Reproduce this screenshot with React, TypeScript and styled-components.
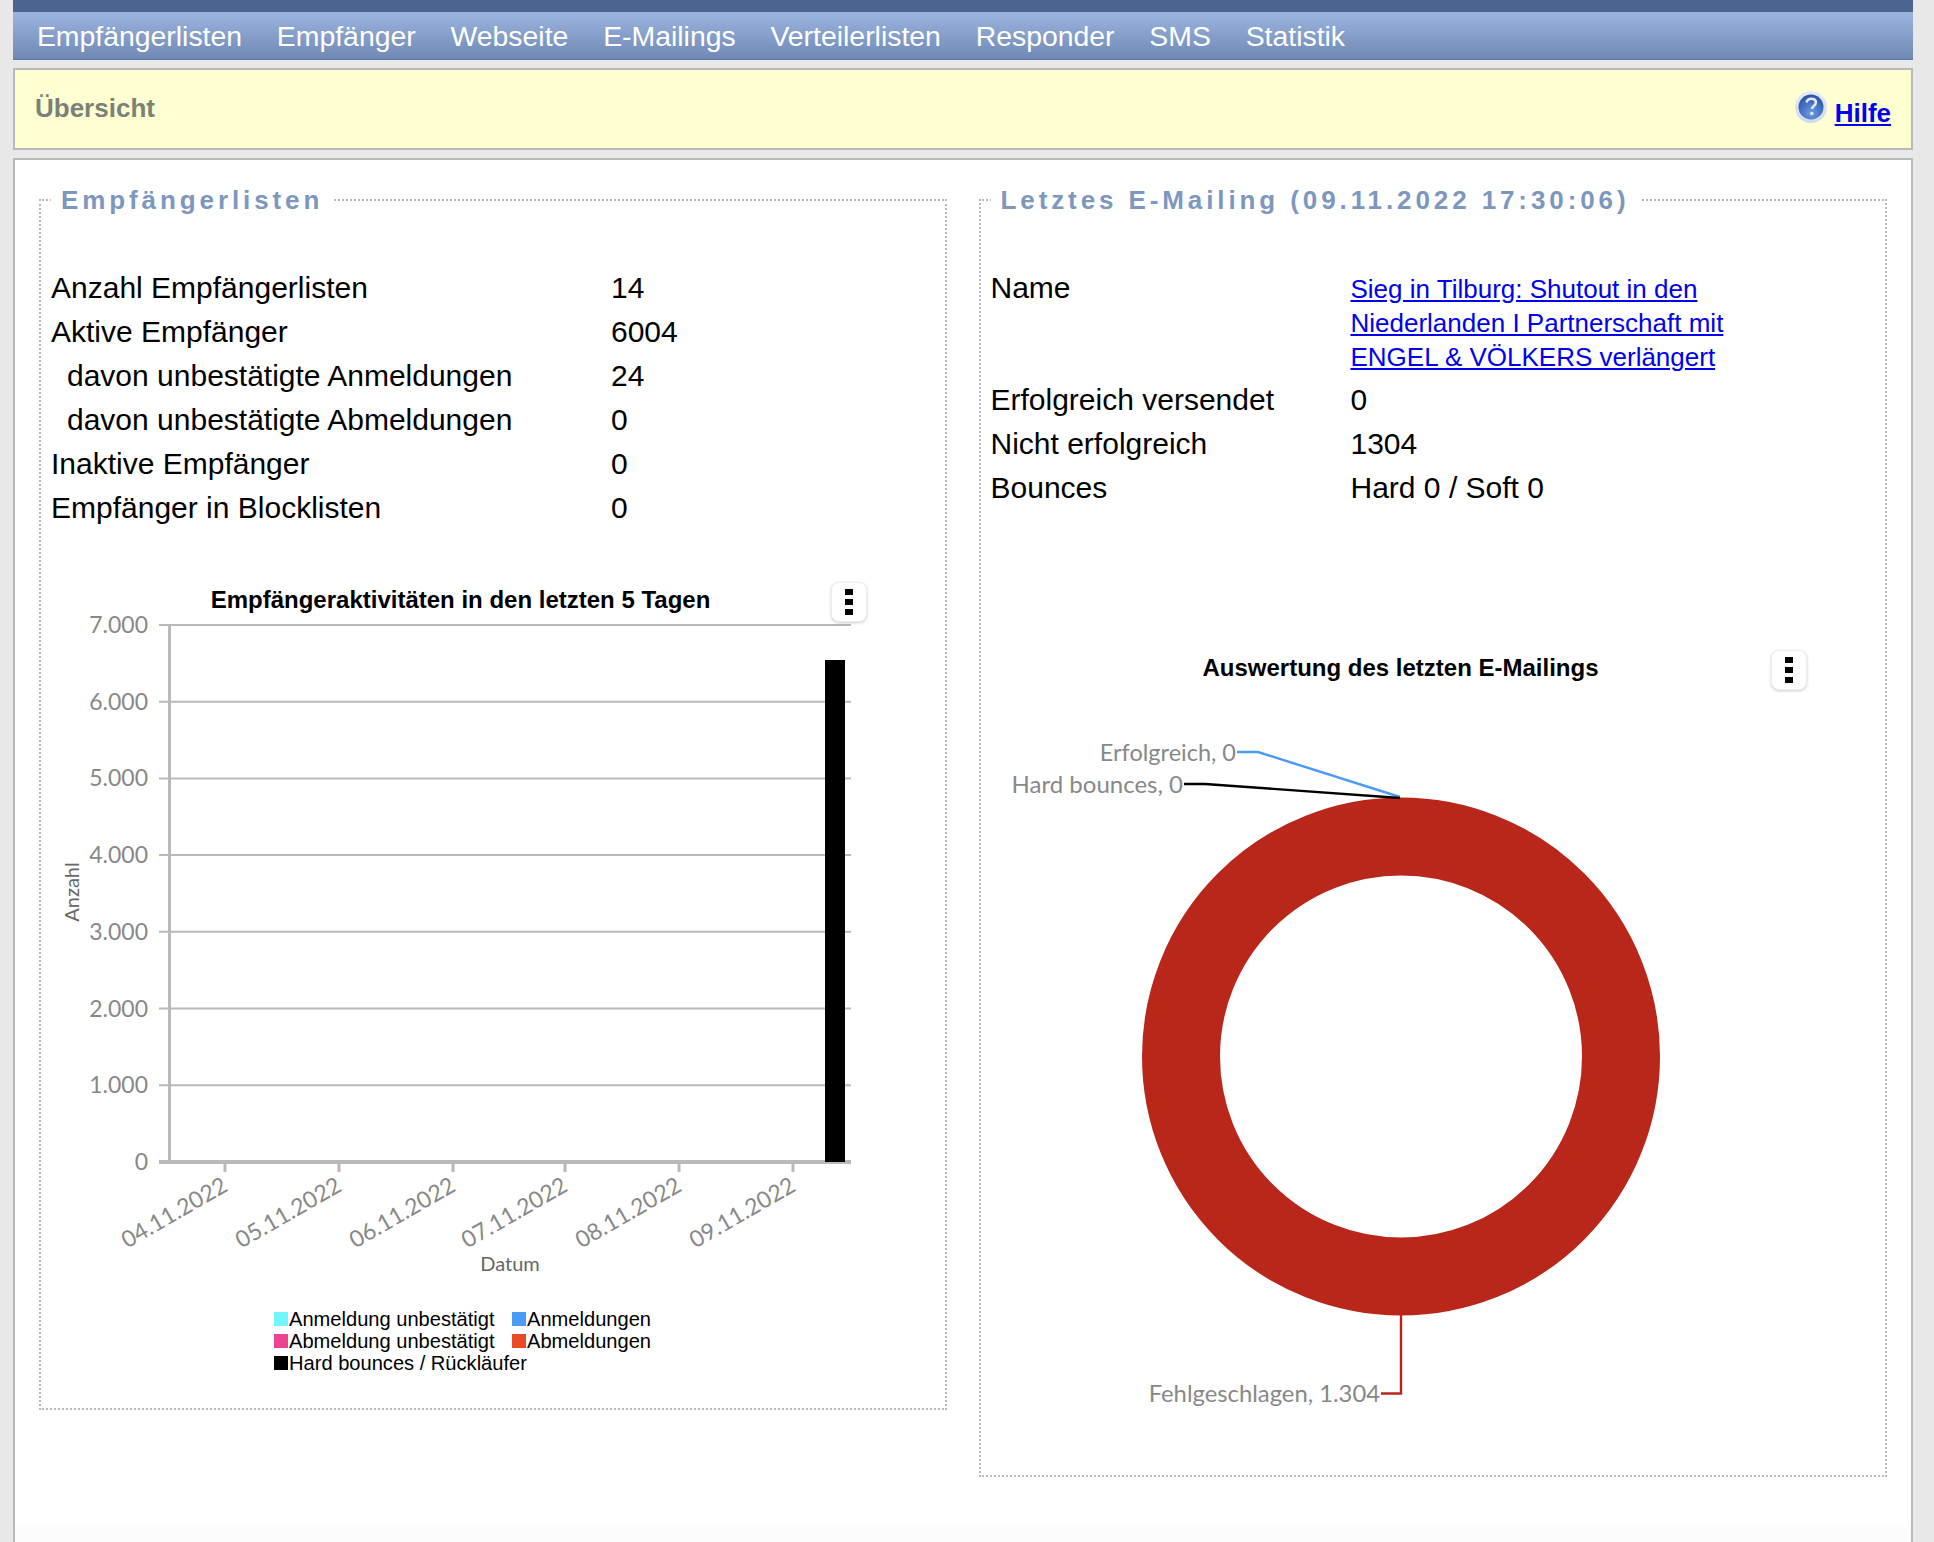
import styled, { createGlobalStyle } from 'styled-components';

const GlobalStyle = createGlobalStyle`
  html, body {
    margin: 0;
    padding: 0;
    background: #e8e8e8;
    font-family: "Liberation Sans", Arial, sans-serif;
    overflow: hidden;
  }
`;

const Page = styled.div`
  width: 1900px;
  height: 1542px;
  margin-left: 13px;
  display: flex;
  flex-direction: column;
  overflow: hidden;
`;

const TopStrip = styled.div`
  height: 12px;
  background: #4b6490;
`;

const Nav = styled.nav`
  height: 47px;
  padding-left: 6.5px;
  display: flex;
  background: linear-gradient(#9cb5e0, #6f88b4);
  border-bottom: 1px solid #5d7aaa;
`;

const NavLink = styled.a`
  padding: 0 17.4px;
  font-size: 28.4px;
  line-height: 48px;
  color: #fff;
`;

const TitleBar = styled.div`
  box-sizing: border-box;
  height: 82px;
  margin-top: 8px;
  padding: 0 20px 0 20px;
  display: flex;
  align-items: center;
  justify-content: space-between;
  background: #ffffd2;
  border: 2px solid #b9b9b9;
`;

const PageTitle = styled.h1`
  margin: 0 0 2px;
  font-size: 26px;
  font-weight: bold;
  color: #7a8278;
`;

const HelpArea = styled.div`
  display: flex;
  align-items: flex-start;
  gap: 8px;
`;

const HelpIconBox = styled.svg`
  display: block;
  margin-top: 2px;
`;

const HelpLink = styled.a`
  margin-top: 9px;
  font-size: 26px;
  font-weight: bold;
  color: #0000ee;
  text-decoration: underline;
`;

const Content = styled.main`
  flex: 1;
  margin-top: 8px;
  padding: 25px 24px 0 24px;
  display: flex;
  align-items: flex-start;
  gap: 32px;
  background: linear-gradient(#fff 1357px, #fcfcfc 1372px);
  border: 2px solid #b9b9b9;
  border-bottom: 0;
`;

const Panel = styled.fieldset<{ $width: number }>`
  box-sizing: border-box;
  width: ${p => p.$width}px;
  min-width: 0;
  margin: 0;
  padding: 0 10px;
  border: 2px dotted #b9b9b9;
`;

const PanelTitle = styled.legend`
  margin-left: 0;
  padding: 0 10px;
  font-size: 26px;
  line-height: 30px;
  font-weight: bold;
  letter-spacing: 3.9px;
  color: #7d97bf;
`;

const Stats = styled.table`
  margin-top: 51px;
  border-collapse: collapse;
  font-size: 30px;
  color: #000;
`;

const Label = styled.td<{ $width: number; $indent?: boolean }>`
  width: ${p => p.$width}px;
  height: 44px;
  padding: 0 0 0 ${p => (p.$indent ? 16 : 0)}px;
  box-sizing: border-box;
  line-height: 44px;
  vertical-align: top;
`;

const Value = styled.td`
  padding: 0;
  line-height: 44px;
  vertical-align: top;
`;

const MailLink = styled.a`
  display: block;
  padding: 6px 0 4px;
  font-size: 26px;
  line-height: 34px;
  color: #0000ee;
  text-decoration: underline;
`;

const ChartWrap = styled.div<{ $gap: number }>`
  position: relative;
  margin-top: ${p => p.$gap}px;
`;

const ChartSvg = styled.svg`
  display: block;
`;

const ChartMenu = styled.button<{ $top: number }>`
  position: absolute;
  left: 780px;
  top: ${p => p.$top}px;
  width: 36px;
  height: 40px;
  padding: 6px 0;
  display: flex;
  flex-direction: column;
  align-items: center;
  justify-content: space-between;
  background: #fff;
  border: 1px solid #eee;
  border-radius: 8px;
  box-shadow: 0 1px 3px rgba(0, 0, 0, 0.2);
`;

const MenuDot = styled.span`
  width: 8px;
  height: 6px;
  background: #000;
`;

const ChartTitle = styled.text`
  font-family: "Liberation Sans", Arial, sans-serif;
  font-size: 24px;
  font-weight: bold;
  fill: #000;
  text-anchor: middle;
`;

const AxisLabel = styled.text<{ $size?: number }>`
  font-family: Lato, "Open Sans", sans-serif;
  font-size: ${p => p.$size ?? 23}px;
  fill: #888;
  text-anchor: end;
`;

const AxisTitle = styled.text`
  font-family: Lato, "Open Sans", sans-serif;
  font-size: 20px;
  fill: #666;
  text-anchor: middle;
`;

const LegendText = styled.text`
  font-family: "Liberation Sans", Arial, sans-serif;
  font-size: 20.1px;
  fill: #000;
`;

const navItems = ['Empfängerlisten', 'Empfänger', 'Webseite', 'E-Mailings', 'Verteilerlisten', 'Responder', 'SMS', 'Statistik'];

const leftRows: [string, string, boolean?][] = [
  ['Anzahl Empfängerlisten', '14'],
  ['Aktive Empfänger', '6004'],
  ['davon unbestätigte Anmeldungen', '24', true],
  ['davon unbestätigte Abmeldungen', '0', true],
  ['Inaktive Empfänger', '0'],
  ['Empfänger in Blocklisten', '0'],
];

const rightRows = [
  ['Erfolgreich versendet', '0'],
  ['Nicht erfolgreich', '1304'],
  ['Bounces', 'Hard 0 / Soft 0'],
];

const yTicks = [7, 6, 5, 4, 3, 2, 1, 0];
const yTop = 625;
const yStep = 76.7;
const xTicks = [
  ['04.11.2022', 225],
  ['05.11.2022', 339],
  ['06.11.2022', 453],
  ['07.11.2022', 565],
  ['08.11.2022', 679],
  ['09.11.2022', 793],
] as const;

const legendItems = [
  ['Anmeldung unbestätigt', '#6ff7fb', 274, 1312],
  ['Anmeldungen', '#4a9bf5', 512, 1312],
  ['Abmeldung unbestätigt', '#ec4393', 274, 1334],
  ['Abmeldungen', '#ec4a26', 512, 1334],
  ['Hard bounces / Rückläufer', '#000', 274, 1356],
] as const;

function HelpIcon() {
  return (
    <HelpIconBox width="32" height="32" viewBox="0 0 32 32">
      <defs>
        <linearGradient id="helpRing" x1="0" y1="0" x2="0" y2="1">
          <stop offset="0%" stopColor="#e6ebf5" />
          <stop offset="100%" stopColor="#cfd9ec" />
        </linearGradient>
        <radialGradient id="helpBlue" cx="50%" cy="75%" r="70%">
          <stop offset="0%" stopColor="#6b9be6" />
          <stop offset="100%" stopColor="#2c55a6" />
        </radialGradient>
      </defs>
      <circle cx="16" cy="16" r="16" fill="url(#helpRing)" />
      <circle cx="16" cy="16" r="12.5" fill="url(#helpBlue)" />
      <path d="M11.5 11.5c.6-2.6 2.4-3.8 4.8-3.8 2.7 0 4.6 1.5 4.6 3.8 0 3.3-4 3.6-4 6.6" fill="none" stroke="#dfe7f6" strokeWidth="2.6" />
      <circle cx="16.8" cy="22.5" r="1.8" fill="#dfe7f6" />
    </HelpIconBox>
  );
}

function ActivityChart() {
  return (
    <ChartSvg width="880" height="847" viewBox="51 561 880 847">
      <ChartTitle x="460.5" y="608">Empfängeraktivitäten in den letzten 5 Tagen</ChartTitle>
      {yTicks.map((tick, i) => {
        const y = yTop + i * yStep;
        return (
          <g key={tick}>
            {tick > 0 && <line x1="159" x2="851" y1={y} y2={y} stroke="#b9b9b9" strokeWidth="2" />}
            <AxisLabel x="148" y={y + 8}>{tick === 0 ? '0' : `${tick}.000`}</AxisLabel>
          </g>
        );
      })}
      <line x1="169.5" x2="169.5" y1={yTop - 1} y2="1162" stroke="#b9b9b9" strokeWidth="3" />
      <line x1="159" x2="851" y1="1162" y2="1162" stroke="#b9b9b9" strokeWidth="4" />
      <rect x="825" y="660" width="20" height="502" fill="#000" />
      {xTicks.map(([label, x]) => (
        <g key={label}>
          <line x1={x} x2={x} y1="1163" y2="1172" stroke="#b9b9b9" strokeWidth="3" />
          <AxisLabel x={x + 4} y="1190" transform={`rotate(-30 ${x + 4} 1190)`}>{label}</AxisLabel>
        </g>
      ))}
      <AxisTitle x="510" y="1271">Datum</AxisTitle>
      <AxisTitle x="79" y="892" transform="rotate(-90 79 892)">Anzahl</AxisTitle>
      {legendItems.map(([label, color, x, y]) => (
        <g key={label}>
          <rect x={x} y={y} width="14" height="14" fill={color} />
          <LegendText x={x + 15} y={y + 14}>{label}</LegendText>
        </g>
      ))}
    </ChartSvg>
  );
}

function DonutChart() {
  return (
    <ChartSvg width="880" height="835" viewBox="991 640 880 835">
      <ChartTitle x="1400.5" y="676">Auswertung des letzten E-Mailings</ChartTitle>
      <circle cx="1401" cy="1056.5" r="220" fill="none" stroke="#b9271b" strokeWidth="78" />
      <polyline points="1237,752 1258,752 1400,797" fill="none" stroke="#4a9bf5" strokeWidth="2.4" />
      <polyline points="1184,784 1205,784 1400,798" fill="none" stroke="#000" strokeWidth="2.4" />
      <polyline points="1401,1315 1401,1393.5 1381,1393.5" fill="none" stroke="#b9271b" strokeWidth="2.4" />
      <AxisLabel $size={23.5} x="1236" y="761">Erfolgreich, 0</AxisLabel>
      <AxisLabel $size={24} x="1183" y="793">Hard bounces, 0</AxisLabel>
      <AxisLabel $size={23.8} x="1380" y="1402">Fehlgeschlagen, 1.304</AxisLabel>
    </ChartSvg>
  );
}

export default function App() {
  return (
    <Page>
      <GlobalStyle />
      <TopStrip />
      <Nav>
        {navItems.map(item => (
          <NavLink key={item}>{item}</NavLink>
        ))}
      </Nav>
      <TitleBar>
        <PageTitle>Übersicht</PageTitle>
        <HelpArea>
          <HelpIcon />
          <HelpLink href="#">Hilfe</HelpLink>
        </HelpArea>
      </TitleBar>
      <Content>
        <Panel $width={908}>
          <PanelTitle>Empfängerlisten</PanelTitle>
          <Stats>
            <tbody>
              {leftRows.map(([label, value, indent]) => (
                <tr key={label}>
                  <Label $width={560} $indent={indent}>{label}</Label>
                  <Value>{value}</Value>
                </tr>
              ))}
            </tbody>
          </Stats>
          <ChartWrap $gap={31}>
            <ActivityChart />
            <ChartMenu $top={21}><MenuDot /><MenuDot /><MenuDot /></ChartMenu>
          </ChartWrap>
        </Panel>
        <Panel $width={909}>
          <PanelTitle>Letztes E-Mailing (09.11.2022 17:30:06)</PanelTitle>
          <Stats>
            <tbody>
              <tr>
                <Label $width={360}>Name</Label>
                <Value>
                  <MailLink href="#">
                    Sieg in Tilburg: Shutout in den<br />
                    Niederlanden I Partnerschaft mit<br />
                    ENGEL &amp; VÖLKERS verlängert
                  </MailLink>
                </Value>
              </tr>
              {rightRows.map(([label, value]) => (
                <tr key={label}>
                  <Label $width={360}>{label}</Label>
                  <Value>{value}</Value>
                </tr>
              ))}
            </tbody>
          </Stats>
          <ChartWrap $gap={130}>
            <DonutChart />
            <ChartMenu $top={10}><MenuDot /><MenuDot /><MenuDot /></ChartMenu>
          </ChartWrap>
        </Panel>
      </Content>
    </Page>
  );
}
